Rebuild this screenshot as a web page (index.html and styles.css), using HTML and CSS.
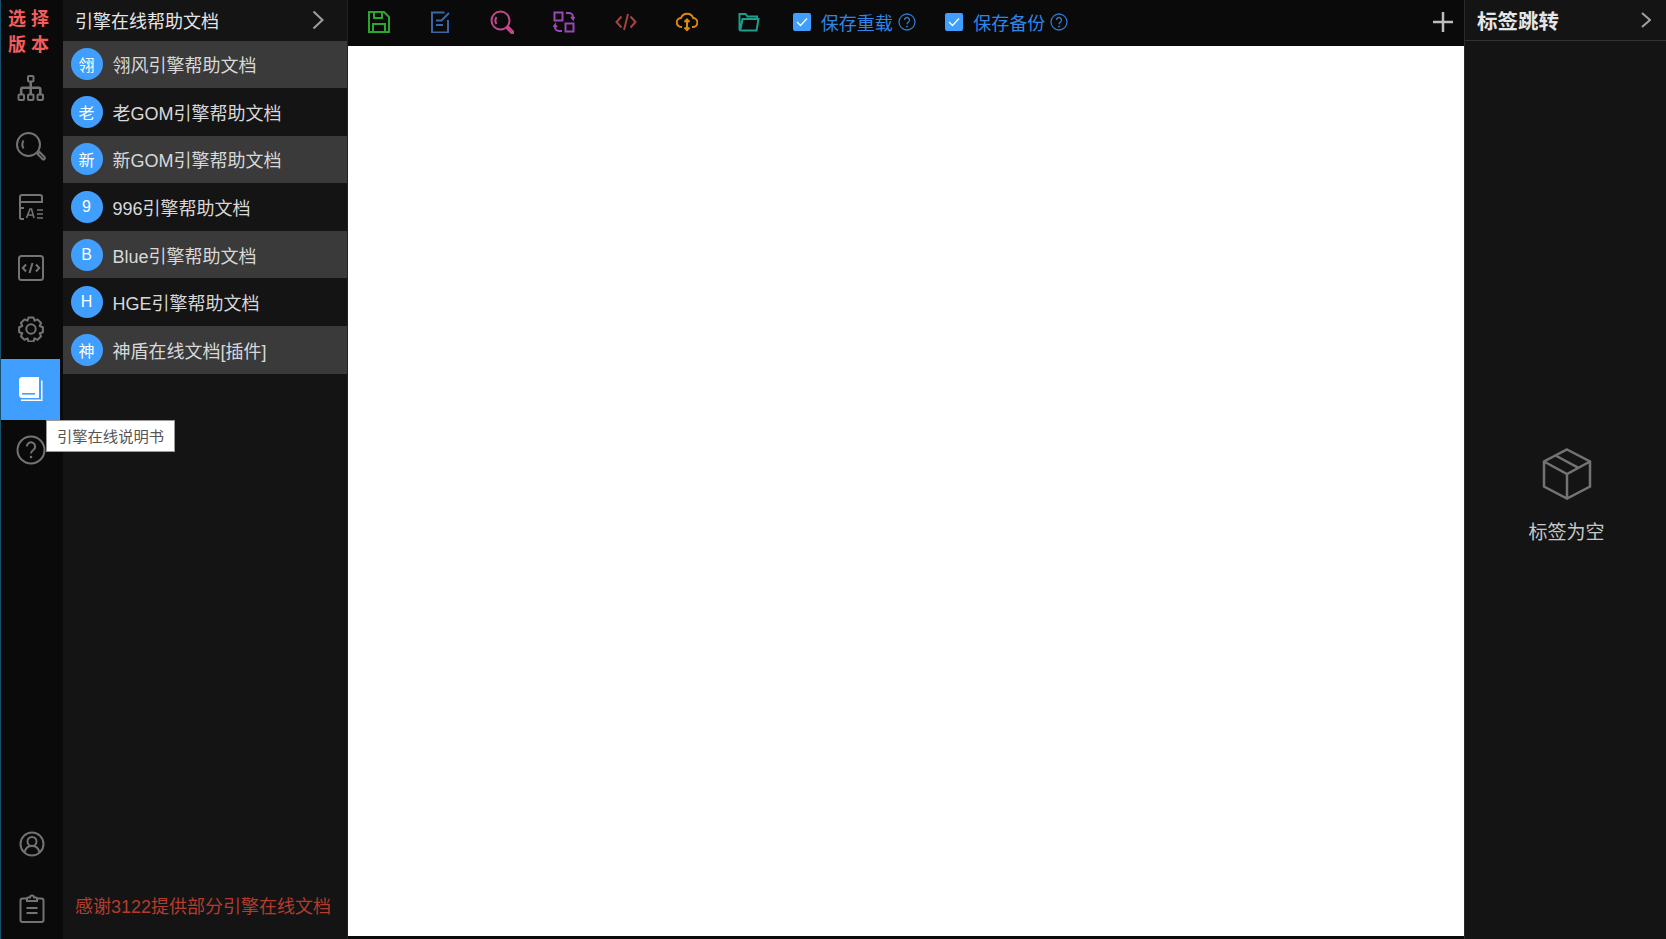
FILE: index.html
```html
<!DOCTYPE html>
<html lang="zh-CN">
  <head>
    <meta charset="UTF-8" />
    <title>引擎在线帮助文档</title>
    <link rel="stylesheet" href="styles.css">
  </head>
  <body>
    <div class="app">
      <!-- left icon rail -->
      <div class="rail">
        <div class="rail-title">选 择<br>版 本</div>
        <div class="rail-item tree">
          <svg width="28" height="28" viewBox="0 0 28 28"><rect x="11" y="2" width="5.5" height="5.5" rx="1"/><rect x="1.5" y="20.5" width="5.5" height="5.5" rx="1"/><rect x="11" y="20.5" width="5.5" height="5.5" rx="1"/><rect x="20.5" y="20.5" width="5.5" height="5.5" rx="1"/><path d="M13.7 7.5V20.5M4.2 20.5V15.2a1.5 1.5 0 0 1 1.5-1.5H21.8a1.5 1.5 0 0 1 1.5 1.5v5.3" stroke-width="2.6"/></svg>
        </div>
        <div class="rail-item">
          <svg width="32" height="32" viewBox="0 0 32 32"><circle cx="13.5" cy="13.5" r="11.5"/><path d="M8.5 9.5a8 8 0 0 0 0 8"/><path d="M22.5 23l2-2 5 5a1.4 1.4 0 0 1-2 2z"/></svg>
        </div>
        <div class="rail-item">
          <svg width="26" height="26" viewBox="0 0 26 26"><path d="M2 25V3a2 2 0 0 1 2-2h18a2 2 0 0 1 2 2v5H2M6 25H2M2 14h4"/><path d="M8.500 24l3.500-9h1.500l2.500 9M10 21h5" stroke-width="1.600"/><path d="M19 16h6M19 20h6M19 24h6" stroke-width="1.500"/></svg>
        </div>
        <div class="rail-item">
          <svg width="26" height="26" viewBox="0 0 26 26"><rect x="1" y="1" width="24" height="24" rx="2.500"/><path d="M8 9.500L4.800 13 8 16.500M18 9.500L21.200 13 18 16.500M14.500 8L11.500 18"/></svg>
        </div>
        <div class="rail-item">
          <svg width="26" height="26" viewBox="0 0 26 26"><circle cx="13" cy="13" r="4.700"/><path d="M10.500 1.500h5l1 3.200 3-1.300 3.600 3.600-1.400 3 3.200 1.200v5l-3.200 1 1.400 3.100-3.600 3.500-3-1.400-1 3.200h-5l-1-3.200-3 1.400-3.600-3.500 1.400-3.100-3.200-1v-5l3.200-1.200-1.400-3 3.600-3.600 3 1.300z" stroke-linejoin="round"/></svg>
        </div>
        <div class="rail-item active">
          <svg width="24" height="24" viewBox="0 0 24 24"><path class="fill" d="M3.500 0H20v21H3.500A3.500 3.500 0 0 1 0 17.500v-14A3.500 3.500 0 0 1 3.500 0z"/><path class="slot" d="M3 16h13v1.600H3z"/><path class="fill" d="M22 3.500h1.500V24H2v-1.500h20z"/></svg>
        </div>
        <div class="rail-item">
          <svg width="30" height="30" viewBox="0 0 30 30"><circle cx="15" cy="15" r="13.500"/><path d="M10.800 11.500a4.200 4.200 0 1 1 6.500 3.500c-1.500 1-2.300 1.800-2.300 3.500"/><circle class="dot" cx="15" cy="22" r="1.300"/></svg>
        </div>
        <div class="rail-bottom">
          <div class="rail-small">
            <svg width="26" height="26" viewBox="0 0 26 26"><circle cx="13" cy="13" r="11.500"/><circle cx="13" cy="10.500" r="4.500"/><path d="M5.500 21.500c.8-4 3.800-6.500 7.500-6.500s6.700 2.500 7.500 6.500"/></svg>
          </div>
          <div class="rail-small">
            <svg width="26" height="30" viewBox="0 0 26 30"><path d="M8 4.500H3.500a2 2 0 0 0-2 2V26a2 2 0 0 0 2 2h19a2 2 0 0 0 2-2V6.500a2 2 0 0 0-2-2H18"/><path d="M8 7V4.500a1 1 0 0 1 1-1h2a2 2 0 0 1 4 0h2a1 1 0 0 1 1 1V7z"/><path d="M7.500 14h11M7.500 19h11" stroke-width="2.200"/></svg>
          </div>
        </div>
      </div>

      <!-- document list -->
      <div class="panel">
        <div class="panel-head">
          <span>引擎在线帮助文档</span>
          <svg class="chev" width="12" height="20" viewBox="0 0 12 20"><path d="M1.500 1.500L10.500 10 1.500 18.500"/></svg>
        </div>
        <div class="doc-row odd"><span class="avatar">翎</span>翎风引擎帮助文档</div>
        <div class="doc-row"><span class="avatar">老</span>老GOM引擎帮助文档</div>
        <div class="doc-row odd"><span class="avatar">新</span>新GOM引擎帮助文档</div>
        <div class="doc-row"><span class="avatar">9</span>996引擎帮助文档</div>
        <div class="doc-row odd"><span class="avatar">B</span>Blue引擎帮助文档</div>
        <div class="doc-row"><span class="avatar">H</span>HGE引擎帮助文档</div>
        <div class="doc-row odd"><span class="avatar">神</span>神盾在线文档[插件]</div>
        <div class="thanks">感谢3122提供部分引擎在线文档</div>
      </div>

      <!-- editor -->
      <div class="main">
        <div class="toolbar">
          <div class="tool green">
            <svg width="22" height="22" viewBox="0 0 22 22"><path d="M1 1h15l5 5v15H1zM6 1v6h8V1M5 21v-8h12v8"/></svg>
          </div>
          <div class="tool blue">
            <svg width="20" height="22" viewBox="0 0 20 22"><path d="M13.500 1.500H1v20h16V9M5 9.500h5M5 14h7M10 10l8-8"/></svg>
          </div>
          <div class="tool pink">
            <svg width="24" height="24" viewBox="0 0 24 24"><circle cx="10.500" cy="10.500" r="9"/><path d="M6.500 7a6.500 6.500 0 0 0 0 7"/><path d="M17 18.500l1.500-1.500 4.500 4.500a1 1 0 0 1-1.500 1.500z"/></svg>
          </div>
          <div class="tool purple">
            <svg width="22" height="22" viewBox="0 0 22 22"><rect x="1.500" y="1.500" width="8" height="8"/><rect x="12.500" y="12.500" width="8" height="8"/><path d="M13 2h3a4 4 0 0 1 4 4v2l-2-2M20 8l1.500-2M9 20H6a4 4 0 0 1-4-4v-2l-1.500 2M2 14l2 2"/></svg>
          </div>
          <div class="tool red">
            <svg width="22" height="20" viewBox="0 0 22 20"><path d="M6.500 4.500L1.500 10l5 5.500M15.500 4.500l5 5.500-5 5.500M13 2L9 18"/></svg>
          </div>
          <div class="tool orange">
            <svg width="22" height="20" viewBox="0 0 22 20"><path d="M6 15H5.500a4.500 4.500 0 0 1-.5-9 6.500 6.500 0 0 1 12.200 0 4.500 4.500 0 0 1-.7 9H16"/><path d="M11 7.500v10M8.500 10L11 7.500l2.500 2.500M8.500 15.500L11 18l2.500-2.500"/></svg>
          </div>
          <div class="tool teal">
            <svg width="22" height="20" viewBox="0 0 22 20"><path d="M1.500 17V2h6l2 2.500H19V7M1.500 17a1.500 1.500 0 0 0 1.500 1.500h15.500L20.500 7H4.500L2.500 17"/></svg>
          </div>
          <div class="check-group first">
            <span class="box"><svg width="12" height="10" viewBox="0 0 12 10"><path d="M1 5l3.500 3.500L11 1.500"/></svg></span>
            <span class="check-label">保存重载</span>
            <svg class="help" width="18" height="18" viewBox="0 0 18 18"><circle cx="9" cy="9" r="8"/><path d="M6.500 7a2.500 2.500 0 1 1 3.900 2.100C9.500 9.700 9 10.200 9 11.200"/><circle class="dot" cx="9" cy="13.500" r=".9"/></svg>
          </div>
          <div class="check-group">
            <span class="box"><svg width="12" height="10" viewBox="0 0 12 10"><path d="M1 5l3.500 3.500L11 1.500"/></svg></span>
            <span class="check-label">保存备份</span>
            <svg class="help" width="18" height="18" viewBox="0 0 18 18"><circle cx="9" cy="9" r="8"/><path d="M6.500 7a2.500 2.500 0 1 1 3.900 2.100C9.500 9.700 9 10.200 9 11.200"/><circle class="dot" cx="9" cy="13.500" r=".9"/></svg>
          </div>
          <svg class="plus" width="20" height="20" viewBox="0 0 20 20"><path d="M10 0v20M0 10h20"/></svg>
        </div>
        <div class="editor"></div>
      </div>

      <!-- tags -->
      <div class="tags">
        <div class="tags-head">
          <span>标签跳转</span>
          <svg class="chev" width="10" height="16" viewBox="0 0 10 16"><path d="M1 1l8 7-8 7"/></svg>
        </div>
        <div class="tags-empty">
          <svg width="52" height="52" viewBox="0 0 52 52"><path d="M26 1.500L49 13.500V38.500L26 50.500 3 38.500V13.500zM3 13.500L26 26 49 13.500M26 26V50.500M14.500 7.500L37.500 19.800"/></svg>
          <div>标签为空</div>
        </div>
      </div>
    </div>

    <div class="tip">引擎在线说明书</div>
  </body>
</html>
```

FILE: styles.css
```css
* {
  box-sizing: border-box;
}
body {
  margin: 0;
  background-color: #0a0a0a;
  font-family: "Liberation Sans", "Noto Sans CJK SC", sans-serif;
  overflow: hidden;
}
svg {
  fill: none;
  stroke: currentColor;
  stroke-width: 2;
  display: block;
}
svg .dot {
  fill: currentColor;
  stroke: none;
}
.app {
  display: flex;
  height: 939px;
}

/* left rail */
.rail {
  width: 63px;
  flex: none;
  display: flex;
  flex-direction: column;
  background-color: #0a0a0a;
  border-left: 1px solid #16506b;
}
.rail-title {
  height: 56px;
  padding: 6px 0 0 0;
  text-align: center;
  color: #f25d5d;
  font-size: 18px;
  font-weight: bold;
  line-height: 26px;
  width: 55px;
}
.rail-item {
  width: 59px;
  height: 60.6px;
  display: flex;
  align-items: center;
  justify-content: center;
  color: #737373;
  flex: none;
}
.rail-item.tree {
  padding-top: 4px;
}
.rail-item.active {
  background-color: #409eff;
  color: #fff;
}
.rail-item .fill {
  fill: #fff;
  stroke: none;
}
.rail-item .slot {
  fill: #409eff;
  stroke: none;
}
.rail-bottom {
  margin-top: auto;
  display: flex;
  flex-direction: column;
  gap: 5px;
}
.rail-small {
  width: 62px;
  height: 60px;
  display: flex;
  align-items: center;
  justify-content: center;
  color: #737373;
}

/* document list */
.panel {
  width: 284px;
  flex: none;
  display: flex;
  flex-direction: column;
  background-color: #141414;
  color: #d8d8d8;
  font-size: 18px;
}
.panel-head {
  height: 40.5px;
  flex: none;
  display: flex;
  align-items: center;
  justify-content: space-between;
  padding: 0 23px 0 12px;
  color: #e5e5e5;
}
.chev {
  color: #a0a0a0;
}
.doc-row {
  height: 47.6px;
  flex: none;
  display: flex;
  align-items: center;
  gap: 10px;
  padding-left: 7.5px;
  background-color: #141414;
}
.doc-row.odd {
  background-color: #3a3a3a;
}
.avatar {
  width: 32px;
  height: 32px;
  flex: none;
  display: flex;
  align-items: center;
  justify-content: center;
  border-radius: 50%;
  background-color: #409eff;
  color: #fff;
  font-size: 16px;
}
.thanks {
  margin-top: auto;
  padding: 0 0 20px 12px;
  color: #b43c2e;
  line-height: 24px;
  white-space: nowrap;
}

/* editor */
.main {
  flex: 1;
  display: flex;
  flex-direction: column;
  min-width: 0;
  border-left: 1px solid #222;
  padding-bottom: 3px;
}
.toolbar {
  height: 46px;
  flex: none;
  display: flex;
  align-items: center;
  padding-bottom: 3px;
  background-color: #0a0a0a;
}
.tool {
  width: 61.7px;
  flex: none;
  display: flex;
  justify-content: center;
}
.green { color: #2aa62a; }
.blue { color: #3a66a5; }
.pink { color: #c2488c; }
.purple { color: #9c46b6; }
.red { color: #a5433e; }
.orange { color: #da8b0c; }
.teal { color: #1f9d8b; }
.check-group {
  display: flex;
  align-items: center;
  margin-left: 29.5px;
  color: #2f86e6;
  font-size: 18px;
}
.check-group.first {
  margin-left: 13px;
}
.box {
  width: 18px;
  height: 18px;
  display: flex;
  align-items: center;
  justify-content: center;
  border-radius: 2px;
  background-color: #409eff;
  color: #fff;
  margin-right: 10px;
}
.box svg {
  stroke-width: 1.300;
}
.check-label {
  margin-right: 5px;
}
.help {
  stroke-width: 1.300;
  color: #2f78c8;
}
.plus {
  margin-left: auto;
  margin-right: 11px;
  color: #bdbdbd;
  stroke-width: 2.500;
}
.editor {
  flex: 1;
  background-color: #fff;
}

/* tags */
.tags {
  width: 202px;
  flex: none;
  display: flex;
  flex-direction: column;
  background-color: #141414;
  border-left: 1px solid #2a2a2a;
}
.tags-head {
  height: 41px;
  flex: none;
  display: flex;
  align-items: center;
  justify-content: space-between;
  padding: 0 15px 0 12px;
  border-bottom: 1px solid #333;
  color: #e5e5e5;
  font-size: 20.5px;
  font-weight: bold;
}
.tags-empty {
  display: flex;
  flex-direction: column;
  align-items: center;
  gap: 17px;
  padding-top: 407px;
  padding-left: 2px;
  color: #c8c8c8;
  font-size: 19px;
}
.tags-empty svg {
  color: #737373;
  stroke-width: 2.500;
}

/* tooltip over the rail */
.tip {
  position: absolute;
  left: 46px;
  top: 420px;
  width: 129px;
  height: 32px;
  padding-bottom: 2px;
  display: flex;
  align-items: center;
  justify-content: center;
  background-color: #fff;
  border: 1px solid #999;
  color: #555;
  font-size: 15.3px;
}
```
